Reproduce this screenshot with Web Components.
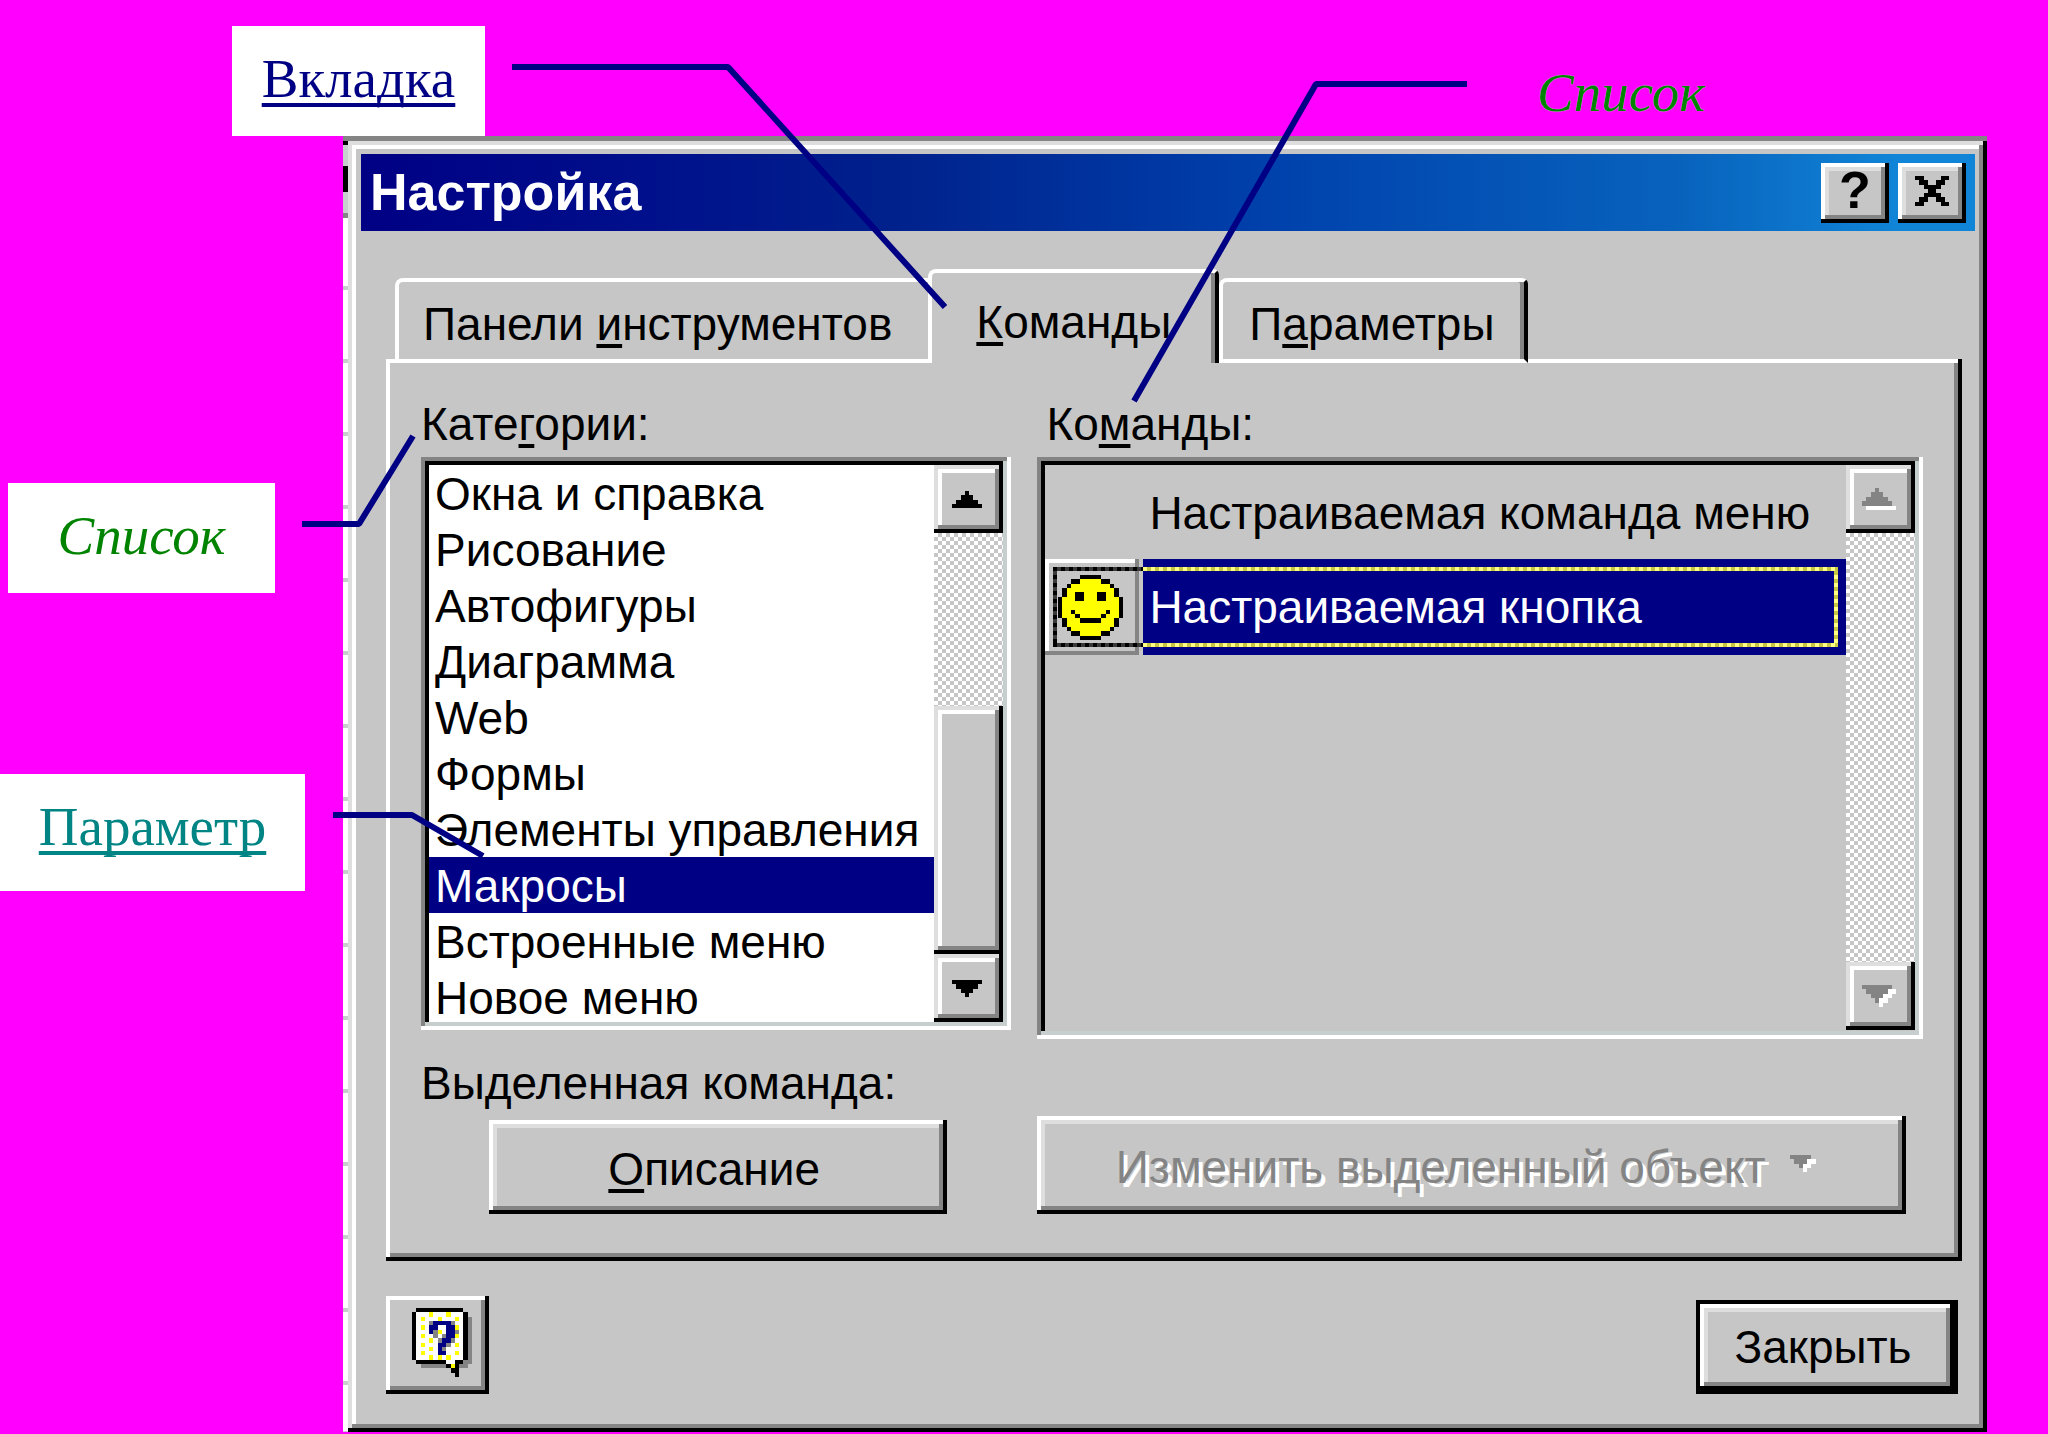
<!DOCTYPE html>
<html lang="ru">
<head>
<meta charset="utf-8">
<title>Настройка</title>
<style>
    html, body {
        margin: 0;
        min-height: 100%;
        background: #ff00ff;
    }
    body {
        position: relative;
        font: 46px/53px "Liberation Sans", Arial, sans-serif;
        color: #000;
        overflow: hidden;
    }
</style>
</head>
<body>
<help-page></help-page>

<script>
// shared bevels, 4px per old screen pixel
const bevels = `
    :host {
        --raised: inset -4px -4px #000, inset 4px 4px #fff, inset -8px -8px #848484, inset 8px 8px #dedede;
        --raised-thin: inset -4px -4px #000, inset 4px 4px #fff, inset -8px -8px #848484;
        --raised-scroll: inset -4px -4px #000, inset 4px 4px #dedede, inset -8px -8px #848484, inset 8px 8px #fff;
        --sunken: inset -4px -4px #fff, inset 4px 4px #848484, inset -8px -8px #c6cece, inset 8px 8px #000;
    }
    button {
        font: inherit;
        color: inherit;
        border: 0;
        margin: 0;
        padding: 0;
        background: #c6c6c6;
    }
    u {
        text-decoration: underline 4px;
        text-underline-offset: 4px;
        text-decoration-skip-ink: none;
    }
`;

function define(name, html, setup) {
    const template = document.createElement('template');
    template.innerHTML = `<style>${bevels}</style>` + html;
    customElements.define(name, class extends HTMLElement {
        constructor() {
            super();
            this.attachShadow({ mode: 'open' });
            this.shadowRoot.appendChild(template.content.cloneNode(true));
        }
        connectedCallback() {
            if (setup) {
                setup(this, this.shadowRoot);
            }
        }
    });
}

// small bitmap icons, one character per cell
const palette = { '#': '#000', 'y': '#ffff00', 'w': '#fff', 'g': '#848484', 'b': '#000084' };
const bitmaps = {
    close: [
        '##....##',
        '.##..##.',
        '..####..',
        '...##...',
        '..####..',
        '.##..##.',
        '##....##'
    ],
    up: [
        '...#...',
        '..###..',
        '.#####.',
        '#######'
    ],
    down: [
        '#######',
        '.#####.',
        '..###..',
        '...#...'
    ],
    'up-off': [
        '...g....',
        '..ggg...',
        '.ggggg..',
        'ggggggg.',
        '.wwwwwww'
    ],
    'down-off': [
        'ggggggg.',
        '.gggggww',
        '..gggww.',
        '...gww..',
        '....w...'
    ],
    'menu-off': [
        'ggggg..',
        '.gggww.',
        '..gww..',
        '...w...'
    ],
    smile: [
        '.....#####.....',
        '...##yyyyy##...',
        '..#yyyyyyyyy#..',
        '.#yyyyyyyyyyy#.',
        '.#yy##yyy##yy#.',
        '#yyy##yyy##yyy#',
        '#yyyyyyyyyyyyy#',
        '#yyyyyyyyyyyyy#',
        '#yy#yyyyyyy#yy#',
        '#yyy#yyyyy#yyy#',
        '.#yyy#####yyy#.',
        '.#yyyyyyyyyyy#.',
        '..#yyyyyyyyy#..',
        '...##yyyyy##...',
        '.....#####.....'
    ],
    help: [
        '.###########..',
        '#wwwywwwywww#.',
        '#wywwwywwwyw#g',
        '#wwwgbbbbgww#g',
        '#wywbbwwbbyw#g',
        '#wwwbgywbbgw#g',
        '#wywwgwgbbyw#g',
        '#wwwywgbbgww#g',
        '#wywwwbbgwyw#g',
        '#wwwywbgwwww#g',
        '#wywwwbbwwyw#g',
        '#wwwywywywww#g',
        '.#######ww##gg',
        '..gggggg#y#gg.',
        '.........##...',
        '..........#...'
    ]
};

define('pixel-icon', `
    <style>
        :host { display: inline-block; line-height: 0; }
    </style>
    <svg aria-hidden="true" shape-rendering="crispEdges" preserveAspectRatio="none"></svg>
`, (host, root) => {
    const rows = bitmaps[host.getAttribute('name')];
    const svg = root.querySelector('svg');
    const cols = rows[0].length;
    let rects = '';
    rows.forEach((row, y) => {
        [...row].forEach((c, x) => {
            if (palette[c]) {
                rects += `<rect x="${x}" y="${y}" width="1" height="1" fill="${palette[c]}"/>`;
            }
        });
    });
    svg.setAttribute('viewBox', `0 0 ${cols} ${rows.length}`);
    svg.setAttribute('width', Math.round(cols * 4.3));
    svg.setAttribute('height', Math.round(rows.length * 4.3));
    svg.innerHTML = rects;
});

define('call-out', `
    <style>
        :host {
            display: block;
            position: absolute;
            box-sizing: border-box;
            padding-bottom: 4px;
            background: #fff;
            text-align: center;
            font: 55px/106px "Liberation Serif", "Times New Roman", serif;
        }
        :host([kind="list"]) { color: #008400; font-style: italic; }
        :host([plain]) { background: none; text-shadow: 0 0 1px #fff; }
    </style>
    <slot></slot>
`);

define('pointer-lines', `
    <style>
        :host { display: block; position: absolute; inset: 0; pointer-events: none; }
        svg { display: block; width: 100%; height: 100%; overflow: visible; }
        path { fill: none; stroke: #000084; stroke-width: 6; stroke-linejoin: bevel; }
    </style>
    <svg aria-hidden="true">
        <path d="M512 67H728L945 307"/>
        <path d="M1467 84H1316L1134 401"/>
        <path d="M302 524H359L413 436"/>
        <path d="M333 815H412L483 856"/>
    </svg>
`);

define('bevel-button', `
    <style>
        :host { display: block; }
        button {
            display: flex;
            align-items: center;
            justify-content: center;
            gap: 24px;
            width: 100%;
            height: 100%;
            padding: 4px 8px 0 0;
            box-shadow: var(--raised);
        }
        :host([thin]) button { padding: 0 0 6px 8px; box-shadow: var(--raised-thin); }
        :host([default]) button {
            border: 4px solid #000;
            padding-top: 0;
        }
        :host([disabled]) button { color: #848484; text-shadow: 4px 4px #fff; }
        :host([compact]) button { padding: 0 0 4px; font-size: 52px; font-weight: bold; }
    </style>
    <button type="button"><slot></slot></button>
`, (host, root) => {
    const button = root.querySelector('button');
    button.disabled = host.hasAttribute('disabled');
    if (host.hasAttribute('label')) {
        button.setAttribute('aria-label', host.getAttribute('label'));
    }
});

define('scroll-bar', `
    <style>
        :host {
            display: flex;
            flex-direction: column;
            width: 69px;
            background: repeating-conic-gradient(#fff 0 25%, #c6c6c6 0 50%) 0 0 / 8px 8px;
        }
        button {
            flex: none;
            display: flex;
            align-items: center;
            justify-content: center;
            height: 68px;
            padding-right: 4px;
            box-shadow: var(--raised-scroll);
        }
        .track { flex: 1; display: flex; flex-direction: column; }
        .thumb { margin-top: auto; background: #c6c6c6; box-shadow: var(--raised-scroll); }
    </style>
    <button type="button" aria-label="Вверх"></button>
    <div class="track"></div>
    <button type="button" aria-label="Вниз"></button>
`, (host, root) => {
    const off = host.hasAttribute('disabled') ? '-off' : '';
    const [up, down] = root.querySelectorAll('button');
    up.innerHTML = `<pixel-icon name="up${off}"></pixel-icon>`;
    down.innerHTML = `<pixel-icon name="down${off}"></pixel-icon>`;
    up.disabled = down.disabled = off !== '';
    if (!off) {
        root.querySelector('.track').innerHTML = '<div class="thumb" style="height: 59%"></div>';
    }
});

define('command-item', `
    <style>
        :host {
            display: grid;
            grid-template-columns: 94px 1fr;
            column-gap: 4px;
            height: 94px;
            line-height: 96px;
        }
        .icon, .label { position: relative; }
        .label { padding-left: 6px; white-space: nowrap; }
        :host([selected]) .label { background: #000084; color: #fff; }
        :host([selected]) .icon {
            display: flex;
            align-items: center;
            padding-left: 13px;
            box-shadow: inset -4px -4px #848484, inset 4px 4px #fff;
        }
        /* dotted focus frame, drawn over both cells */
        :host([selected]) .icon::after,
        :host([selected]) .label::after {
            --dots: #000 0 4px, #393939 4px 8px;
            content: "";
            position: absolute;
            inset: 8px -4px 8px 8px;
            background:
                repeating-linear-gradient(90deg, var(--dots)) 0 0 / 100% 4px no-repeat,
                repeating-linear-gradient(90deg, var(--dots)) 0 100% / 100% 4px no-repeat,
                repeating-linear-gradient(var(--dots)) var(--side, 0) 0 / 4px 100% no-repeat;
        }
        :host([selected]) .label::after {
            --dots: #ffff84 0 4px, #c6c642 4px 8px;
            --side: 100%;
            inset: 8px 8px 8px 0;
        }
    </style>
    <div class="icon"><slot name="icon"></slot></div>
    <div class="label"><slot></slot></div>
`);

define('tab-strip', `
    <style>
        :host {
            display: flex;
            align-items: flex-end;
            position: relative;
            margin: 0 0 -4px 9px;
            height: 94px;
        }
        button {
            height: 85px;
            padding: 8px 36px 0 24px;
            white-space: nowrap;
            border: solid #fff;
            border-width: 4px 0 4px 4px;
            border-top-left-radius: 8px;
        }
        button:last-child {
            padding: 8px 30px 0 26px;
            border-right: 4px solid #000;
            border-top-right-radius: 6px;
            box-shadow: inset -4px 0 #848484;
        }
        button[aria-selected="true"] {
            height: 94px;
            padding: 8px 44px 0;
            border-right: 4px solid #000;
            border-bottom: 0;
            border-top-right-radius: 6px;
            box-shadow: inset -4px 0 #848484;
        }
    </style>
    <button type="button" role="tab" aria-selected="false">Панели <u>и</u>нструментов</button>
    <button type="button" role="tab" aria-selected="true"><u>К</u>оманды</button>
    <button type="button" role="tab" aria-selected="false">П<u>а</u>раметры</button>
`, host => host.setAttribute('role', 'tablist'));

define('commands-panel', `
    <style>
        :host {
            display: grid;
            grid-template-columns: 2fr 3fr;
            column-gap: 26px;
            padding: 39px 39px 47px 35px;
            box-shadow: var(--raised-thin);
        }
        #commands-label { padding-left: 9px; }
        .list {
            display: flex;
            align-self: start;
            box-sizing: border-box;
            margin-top: 6px;
            padding: 8px;
            height: 573px;
            box-shadow: var(--sunken);
        }
        .commands { height: 582px; padding-bottom: 9px; }
        select {
            flex: 1;
            min-width: 0;
            height: 557px;
            box-sizing: border-box;
            padding: 0;
            border: 0;
            border-radius: 0;
            outline: 0;
            background: #fff;
            font: inherit;
            color: #000;
            overflow: hidden;
            scrollbar-width: none;
        }
        option {
            box-sizing: border-box;
            height: 56px;
            min-height: 0;
            padding: 2px 0 0 6px;
            line-height: 54px;
            color: #000;
        }
        option:checked { background: #000084 linear-gradient(#000084, #000084); color: #fff; }
        .items { flex: 1; min-width: 0; }
        .chosen { grid-column: 1 / -1; margin-top: 18px; }
        bevel-button { height: 94px; align-self: end; margin: 6px 64px 0 68px; }
        bevel-button[disabled] { height: 98px; margin: 6px 17px 0 0; }
        bevel-button pixel-icon { margin-bottom: 8px; }
    </style>
    <label for="categories">Кате<u>г</u>ории:</label>
    <label id="commands-label">Ко<u>м</u>анды:</label>
    <div class="list">
        <select id="categories" size="10">
            <option>Окна и справка</option>
            <option>Рисование</option>
            <option>Автофигуры</option>
            <option>Диаграмма</option>
            <option>Web</option>
            <option>Формы</option>
            <option>Элементы управления</option>
            <option selected>Макросы</option>
            <option>Встроенные меню</option>
            <option>Новое меню</option>
        </select>
        <scroll-bar></scroll-bar>
    </div>
    <div class="list commands">
        <div class="items" role="listbox" aria-labelledby="commands-label" tabindex="0">
            <command-item role="option">Настраиваемая команда меню</command-item>
            <command-item role="option" aria-selected="true" selected>
                <pixel-icon slot="icon" name="smile"></pixel-icon>Настраиваемая кнопка
            </command-item>
        </div>
        <scroll-bar disabled></scroll-bar>
    </div>
    <div class="chosen">Выделенная команда:</div>
    <bevel-button><span><u>О</u>писание</span></bevel-button>
    <bevel-button disabled>Изменить выделенный объект <pixel-icon name="menu-off"></pixel-icon></bevel-button>
`);

define('dialog-window', `
    <style>
        :host {
            display: block;
            padding-left: 5px;
            border-top: 5px solid #848484;
            /* edge of the sheet behind the dialog */
            background:
                linear-gradient(#000 4px, #c6cece 4px 25px, #000 25px 51px, #c6cece 51px 72px, #848484 72px 77px, #fff 77px 100px) 0 0 / 5px 100px no-repeat,
                repeating-linear-gradient(#c6cece 0 4px, #fff 4px 73px) 0 -1px;
        }
        .frame {
            padding: 13px 12px 38px 13px;
            background: #c6c6c6;
            box-shadow: inset -4px -4px #000, inset 4px 4px #dedede, inset -8px -8px #848484, inset 8px 8px #fff;
        }
        header {
            display: flex;
            align-items: center;
            gap: 9px;
            height: 77px;
            margin-bottom: 38px;
            padding: 0 9px;
            background: linear-gradient(90deg, #000084, #00108c 18%, #00218c 33%, #0042ad 57%, #0863bd 82%, #1084d6 95%);
            color: #fff;
        }
        h1 { flex: 1; margin: 0; font-size: 52px; line-height: 77px; }
        bevel-button { width: 68px; height: 60px; color: #000; }
        main { margin: 0 13px 0 25px; }
        footer {
            display: flex;
            justify-content: space-between;
            align-items: flex-end;
            margin: 35px 17px 0 25px;
        }
    </style>
    <div class="frame">
        <header>
            <h1></h1>
            <bevel-button compact label="Справка">?</bevel-button>
            <bevel-button compact label="Закрыть окно"><pixel-icon name="close"></pixel-icon></bevel-button>
        </header>
        <main><slot></slot></main>
        <footer><slot name="footer"></slot></footer>
    </div>
`, (host, root) => {
    root.querySelector('h1').textContent = host.getAttribute('caption');
});

define('help-page', `
    <style>
        :host { display: block; }
        dialog-window { margin: 136px 61px 2px 343px; }
        .help { width: 103px; height: 98px; }
        .close { width: 262px; height: 94px; }
        a {
            color: #000084;
            text-decoration: underline 4px;
            text-underline-offset: 6px;
            text-decoration-skip-ink: none;
        }
        .tab { left: 232px; top: 26px; width: 253px; }
        .list { left: 8px; top: 483px; width: 267px; }
        .command-list { left: 1537px; top: 40px; }
        .param { left: 0; top: 774px; width: 305px; height: 117px; }
        .param a { color: #008484; }
    </style>
    <dialog-window caption="Настройка">
        <tab-strip></tab-strip>
        <commands-panel></commands-panel>
        <bevel-button class="help" slot="footer" thin label="Помощник"><pixel-icon name="help"></pixel-icon></bevel-button>
        <bevel-button class="close" slot="footer" default>Закрыть</bevel-button>
    </dialog-window>
    <call-out class="tab"><a href="#tab">Вкладка</a></call-out>
    <call-out class="list" kind="list">Список</call-out>
    <call-out class="command-list" kind="list" plain>Список</call-out>
    <call-out class="param"><a href="#param">Параметр</a></call-out>
    <pointer-lines></pointer-lines>
`);
</script>
</body>
</html>
